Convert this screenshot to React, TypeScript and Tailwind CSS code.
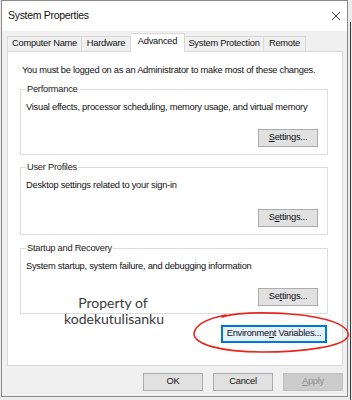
const FONT = "font-['Liberation_Sans',Arial,sans-serif]";
const TXT = "text-[9.3px] tracking-[-0.25px] whitespace-nowrap";

function Btn({ label, w, focused, disabled }: { label: React.ReactNode; w: string; focused?: boolean; disabled?: boolean }) {
  return (
    <div
      className={`${w} h-[18px] flex items-center justify-center ${TXT} ${
        disabled
          ? "bg-[#cccccc] border border-[#bfbfbf] text-[#8f8f8f]"
          : focused
          ? "bg-[#e5f1fb] border border-[#0078d7] text-[#111] shadow-[inset_0_0_0_1px_#0078d7]"
          : "bg-[#e1e1e1] border border-[#adadad] text-[#111]"
      }`}
    >
      {label}
    </div>
  );
}

function Group({ title, desc, accel, h }: { title: string; desc: string; accel: React.ReactNode; h: string }) {
  return (
    <fieldset className={`border border-[#dcdcdc] ${h} px-[5px] flex flex-col`}>
      <legend className={`px-[1px] leading-[12px] text-[#222] ${TXT}`}>{title}</legend>
      <div className={`mt-[6px] leading-[12px] text-[#111] ${TXT}`}>{desc}</div>
      <div className="mt-auto mb-[7px] mr-[4px] self-end">
        <Btn w="w-[60px]" label={accel} />
      </div>
    </fieldset>
  );
}

export default function App() {
  return (
    <div className={`w-[352px] h-[400px] bg-[#ececec] flex relative overflow-hidden ${FONT}`}>
      <div className="ml-[1px] w-[347px] h-[397px] border border-[#8a8a8a] bg-[#f0f0f0] flex flex-col">
        {/* title bar */}
        <div className="h-[30px] bg-white flex items-center justify-between pl-[6px] pr-[5px]">
          <span className="text-[10.5px] tracking-[-0.3px] text-[#111]">System Properties</span>
          <svg width="10" height="10" viewBox="0 0 10 10" className="mr-[1px]">
            <path d="M1 1 L9 9 M9 1 L1 9" stroke="#222" strokeWidth="0.9" />
          </svg>
        </div>

        {/* tabs */}
        <div className={`mt-[2px] ml-[5px] flex items-end h-[18px] text-[#111] relative z-10 ${TXT}`}>
          <div className="w-[75px] h-[15px] border border-b-0 border-[#d9d9d9] bg-[#f0f0f0] flex items-center justify-center">Computer Name</div>
          <div className="w-[49px] h-[15px] border border-l-0 border-b-0 border-[#d9d9d9] bg-[#f0f0f0] flex items-center justify-center">Hardware</div>
          <div className="w-[54px] h-[19px] -mb-px border border-l-0 border-b-0 border-[#d9d9d9] bg-white flex items-center justify-center pb-[2px]">Advanced</div>
          <div className="w-[79px] h-[15px] border border-l-0 border-b-0 border-[#d9d9d9] bg-[#f0f0f0] flex items-center justify-center">System Protection</div>
          <div className="w-[42px] h-[15px] border border-l-0 border-b-0 border-[#d9d9d9] bg-[#f0f0f0] flex items-center justify-center">Remote</div>
        </div>

        {/* panel */}
        <div className="ml-[5px] w-[336px] h-[315px] border border-[#d9d9d9] bg-white relative">
          <div className="ml-[12px] w-[308px] flex flex-col">
            <div className={`mt-[11px] ml-[2px] leading-[14px] text-[#111] ${TXT}`}>
              You must be logged on as an Administrator to make most of these changes.
            </div>
            <div className="mt-[6px]">
              <Group h="h-[72px]" title="Performance" desc="Visual effects, processor scheduling, memory usage, and virtual memory" accel={<span><u>S</u>ettings...</span>} />
            </div>
            <div className="mt-[6px]">
              <Group h="h-[74px]" title="User Profiles" desc="Desktop settings related to your sign-in" accel={<span>S<u>e</u>ttings...</span>} />
            </div>
            <div className="mt-[7px]">
              <Group h="h-[72px]" title="Startup and Recovery" desc="System startup, system failure, and debugging information" accel={<span>Se<u>t</u>tings...</span>} />
            </div>
            <div className="mt-[11px] self-end mr-[1px]">
              <Btn w="w-[106px]" focused label={<span>Environme<u>n</u>t Variables...</span>} />
            </div>
          </div>

          {/* watermark */}
          <div className="absolute left-[56px] top-[243px] w-[98px] text-center font-['Lato',sans-serif] text-[14px] leading-[16px] text-[#3a3a3a]">
            Property of
            <br />
            kodekutulisanku
          </div>
        </div>

        {/* bottom buttons */}
        <div className="mt-[7px] ml-[141px] flex gap-[10px]">
          <Btn w="w-[60px]" label="OK" />
          <Btn w="w-[60px]" label="Cancel" />
          <Btn w="w-[60px]" disabled label={<span><u>A</u>pply</span>} />
        </div>
      </div>

      <div className="ml-[2px] mt-[22px] w-[1px] h-[378px] bg-[#3a3a3a]" />

      <svg className="absolute left-0 top-0 pointer-events-none" width="352" height="400" viewBox="0 0 352 400">
        <path
          d="M226 315 C210 318 196 324 194 333 C193 344 220 352 262 352 C300 352 345 347 348 336 C350 326 330 317 290 314 C260 312 235 313 222 317"
          fill="none"
          stroke="#e8261f"
          strokeWidth="1.6"
          strokeLinecap="round"
        />
      </svg>
    </div>
  );
}
